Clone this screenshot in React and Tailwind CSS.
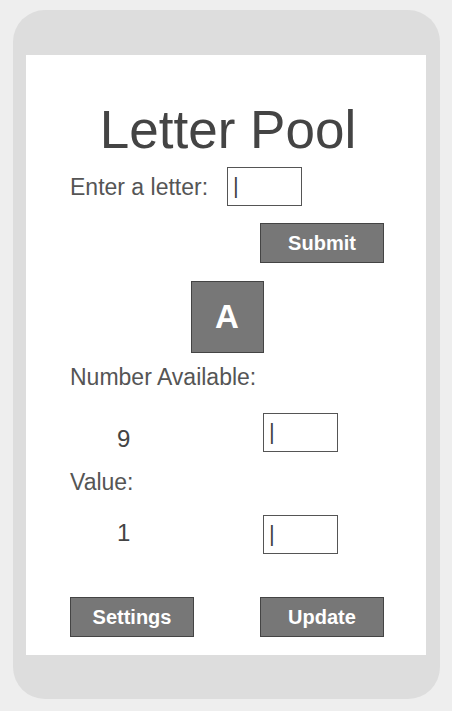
import React from 'react';

const font = { fontFamily: '"Liberation Sans", Arial, sans-serif' };

const CaretBox = ({ className = '' }) => (
  <div
    className={`w-[75px] h-[39px] border border-[#555] bg-white flex items-start pt-[6px] pl-[5px] text-[22px] leading-[24px] text-[#444] ${className}`}
  >
    |
  </div>
);

const GrayButton = ({ label }) => (
  <button className="w-[124px] h-[40px] shrink-0 bg-[#777777] border border-[#444] text-white font-bold text-[20px] leading-none">
    {label}
  </button>
);

const App = () => {
  return (
    <div className="w-[452px] h-[711px] bg-[#eeeeee] pt-[10px] pl-[13px]" style={font}>
      <div className="w-[427px] h-[689px] bg-[#dddddd] rounded-[32px] pt-[45px] pl-[13px]">
        <div className="w-[400px] h-[600px] bg-white pl-[44px] pr-[42px] pt-[45px]">
          <h1 className="text-center text-[53px] leading-[60px] text-[#444] mr-[-2px]">Letter Pool</h1>

          <div className="flex items-center mt-[7px]">
            <span className="text-[23px] leading-[26px] text-[#555]">Enter a letter:</span>
            <CaretBox className="ml-[19px]" />
          </div>

          <div className="flex justify-end mt-[17px]">
            <GrayButton label="Submit" />
          </div>

          <div className="flex justify-center mt-[18px]">
            <div className="w-[73px] h-[72px] bg-[#777777] border border-[#444] flex items-center justify-center text-white font-bold text-[33px]">
              A
            </div>
          </div>

          <p className="mt-[11px] text-[23px] leading-[26px] text-[#555]">Number Available:</p>

          <div className="flex items-start mt-[23px]">
            <div className="w-[193px] pl-[47px] pt-[12px] text-[24px] leading-[28px] text-[#444]">9</div>
            <CaretBox />
          </div>

          <p className="mt-[16px] text-[23px] leading-[26px] text-[#555]">Value:</p>

          <div className="flex items-start mt-[20px]">
            <div className="w-[193px] pl-[47px] pt-[4px] text-[24px] leading-[28px] text-[#444]">1</div>
            <CaretBox />
          </div>

          <div className="flex mt-[43px] gap-[66px]">
            <GrayButton label="Settings" />
            <GrayButton label="Update" />
          </div>
        </div>
      </div>
    </div>
  );
};

export default App;
